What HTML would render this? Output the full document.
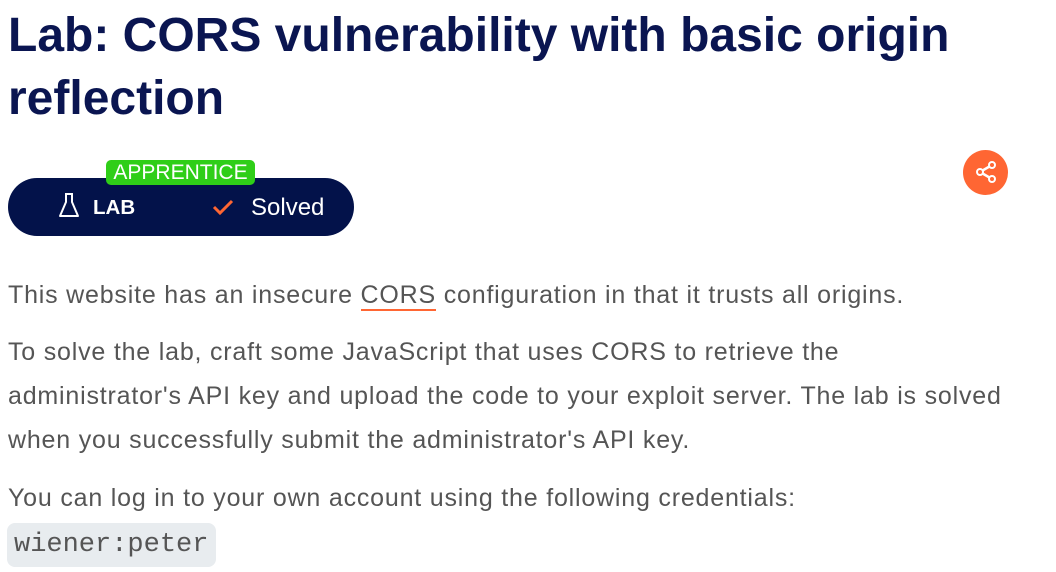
<!DOCTYPE html>
<html><head><meta charset="utf-8"><style>
body{margin:0;background:#fff;width:1056px;height:572px;overflow:hidden;position:relative;font-family:"Liberation Sans",Arial,sans-serif}
h1{position:absolute;left:8px;top:4px;margin:0;font-size:48px;line-height:63px;color:#0a1551;font-weight:bold;width:1040px}
.pill{position:absolute;left:8px;top:178px;width:346px;height:58px;border-radius:29px;background:#03124a;color:#fff}
.app{position:absolute;left:106px;top:160px;width:149px;height:25px;background:#2fce18;border-radius:5px;color:#fff;font-size:21px;line-height:25px;text-align:center}
.lab{position:absolute;left:85px;top:18px;font-weight:bold;font-size:20.5px}
.solved{position:absolute;left:243px;top:16px;font-size:24px}
.share{position:absolute;left:963px;top:150px;width:45px;height:45px;border-radius:50%;background:#ff6633}
p{position:absolute;left:8px;margin:0;font-size:25px;letter-spacing:0.8px;color:#555;line-height:44px;width:1010px}
u{text-decoration:none;border-bottom:2px solid #ff6633}
.code{position:absolute;left:7px;top:523px;width:209px;height:44px;background:#e8ecef;border-radius:8px;font-family:"Liberation Mono",monospace;font-size:27px;color:#555;line-height:44px;text-indent:7px}
</style></head><body>
<h1>Lab: CORS vulnerability with basic origin reflection</h1>
<div class="pill">
<svg style="position:absolute;left:50px;top:14px" width="22" height="28" viewBox="0 0 22 28"><path d="M7 2h8M8 2v8L2 24h18L14 10V2" fill="none" stroke="#fff" stroke-width="2" stroke-linejoin="round"/></svg>
<span class="lab">LAB</span>
<svg style="position:absolute;left:204px;top:20px" width="22" height="18" viewBox="0 0 22 18"><path d="M2 9l6 6L20 3" fill="none" stroke="#ff6633" stroke-width="3"/></svg>
<span class="solved">Solved</span>
</div>
<div class="app">APPRENTICE</div>
<div class="share"><svg width="45" height="45" viewBox="0 0 45 45"><path d="M29 15L17 22L29 29" fill="none" stroke="#fff" stroke-width="2.5"/><circle cx="29" cy="15" r="3" fill="#ff6633" stroke="#fff" stroke-width="2"/><circle cx="17" cy="22" r="3" fill="#ff6633" stroke="#fff" stroke-width="2"/><circle cx="29" cy="29" r="3" fill="#ff6633" stroke="#fff" stroke-width="2"/></svg></div>
<p style="top:273px">This website has an insecure <u>CORS</u> configuration in that it trusts all origins.</p>
<p style="top:330px">To solve the lab, craft some JavaScript that uses CORS to retrieve the administrator's API key and upload the code to your exploit server. The lab is solved when you successfully submit the administrator's API key.</p>
<p style="top:476px">You can log in to your own account using the following credentials:</p>
<div class="code">wiener:peter</div>
</body></html>
